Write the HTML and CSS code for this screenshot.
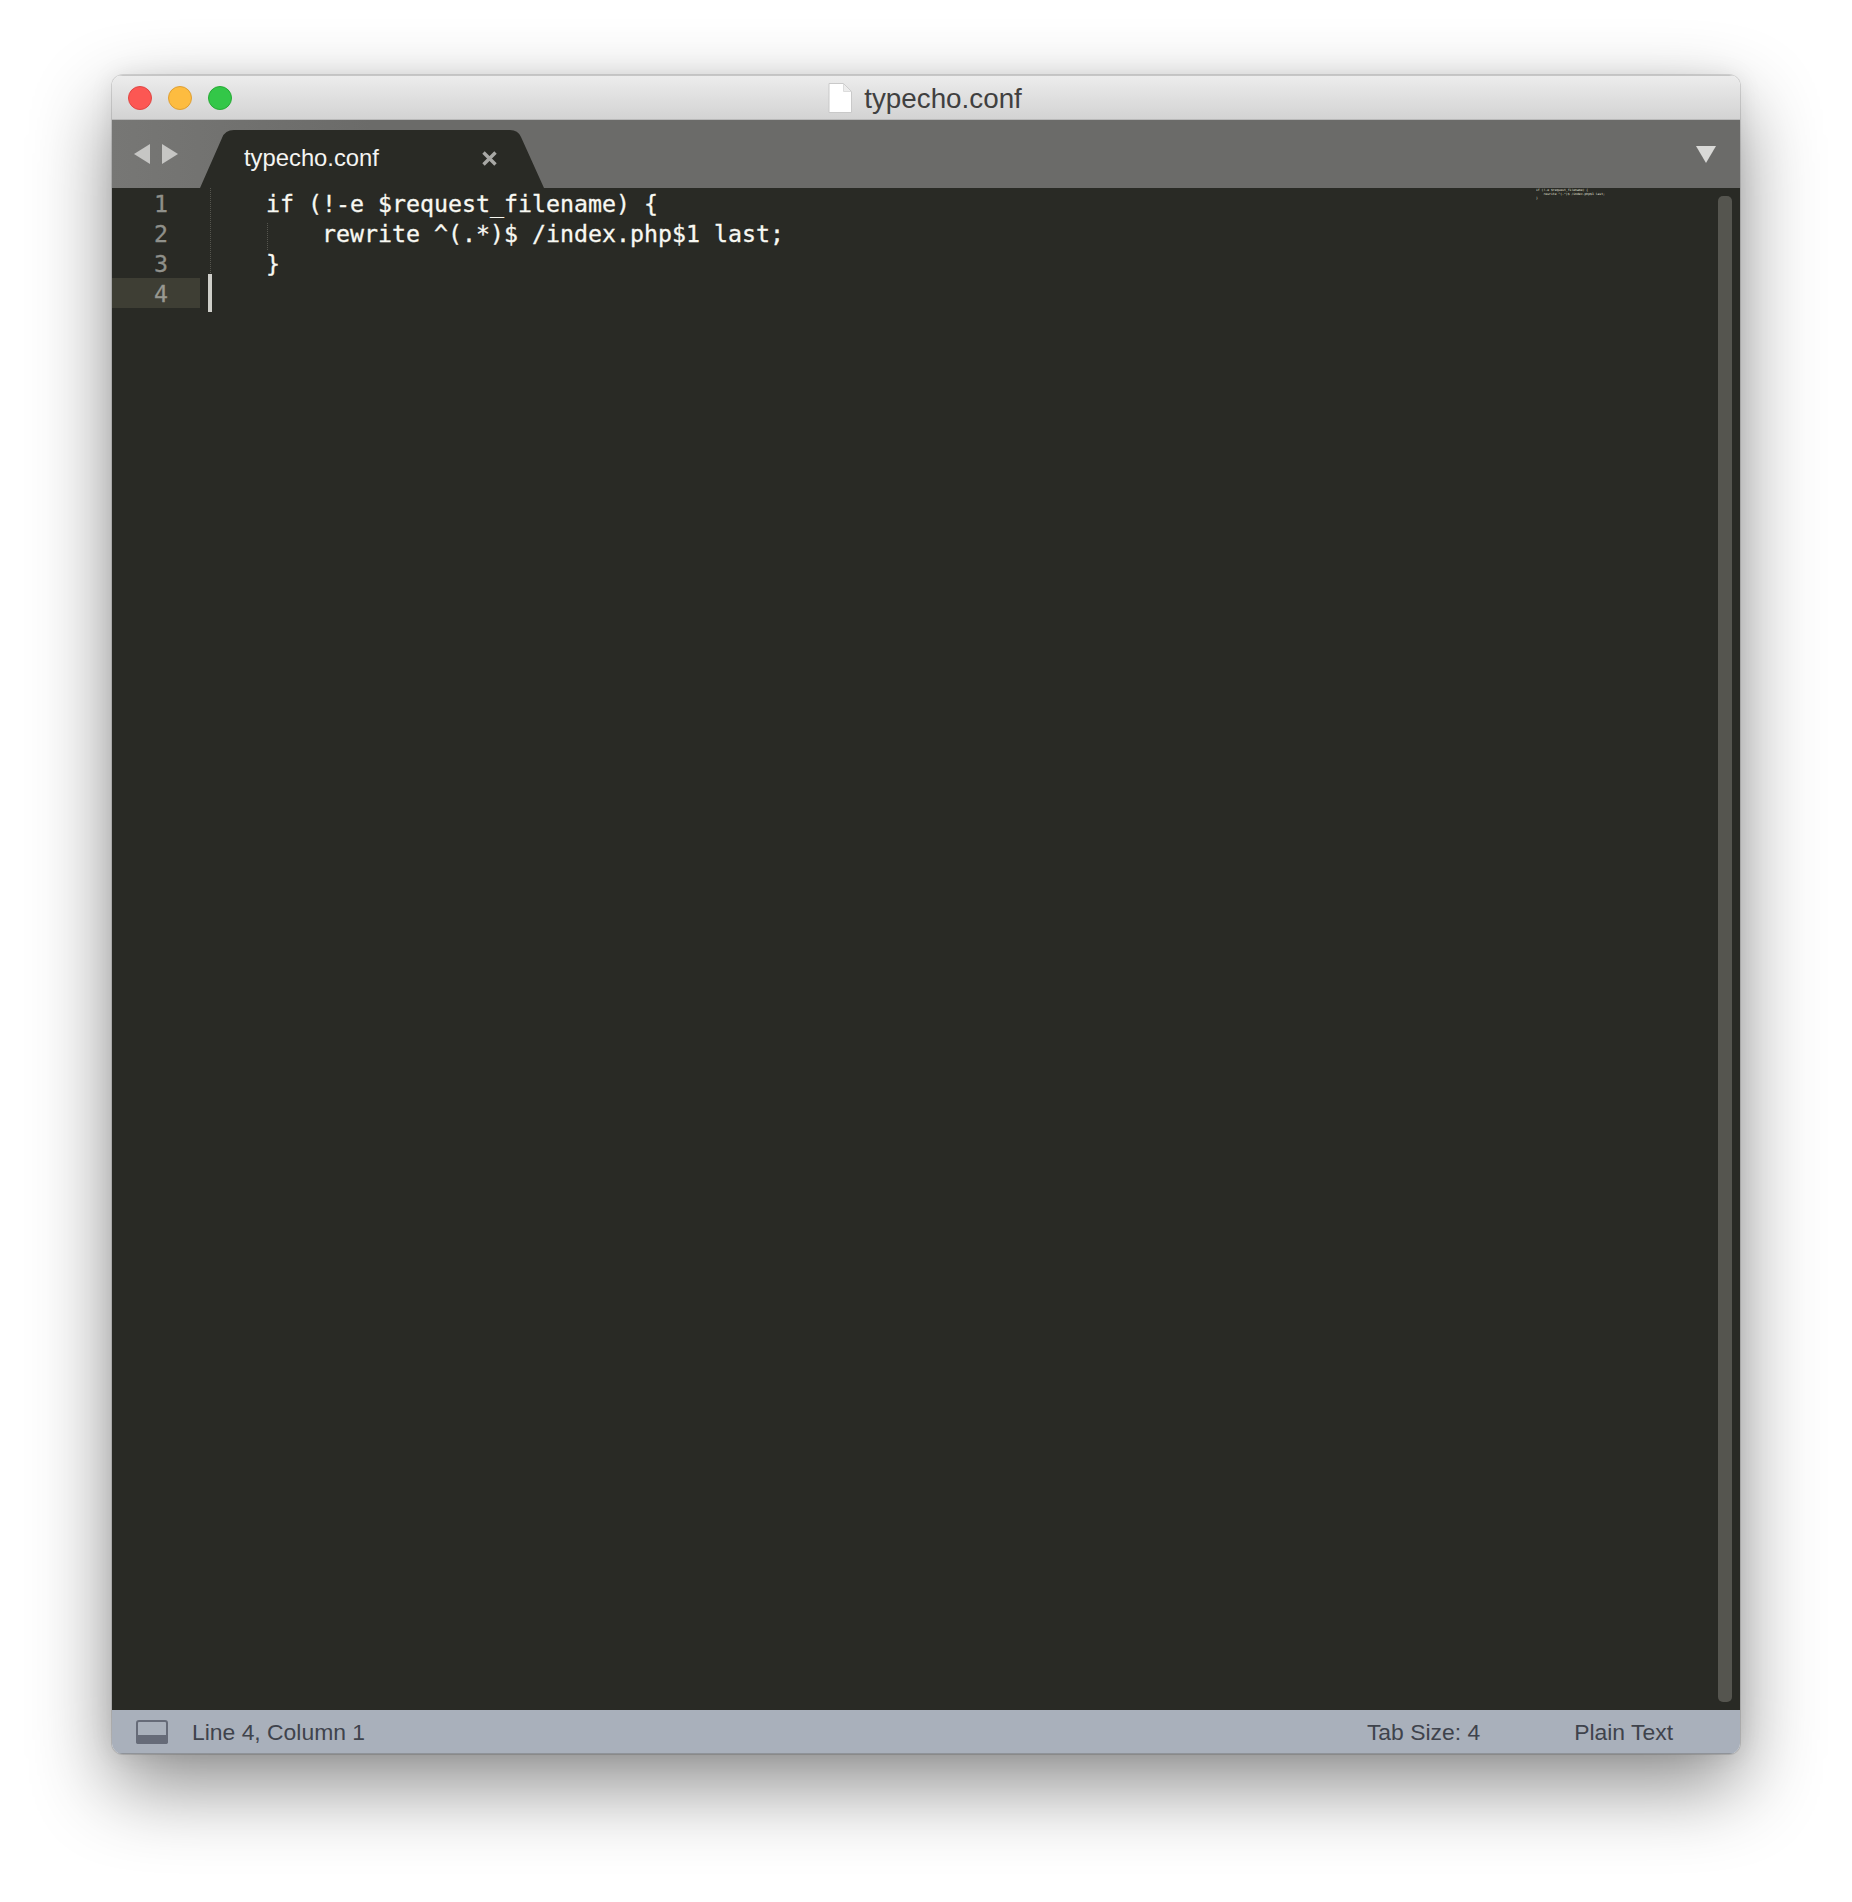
FILE: index.html
```html
<!DOCTYPE html>
<html lang="en">
<head>
<meta charset="utf-8">
<title>typecho.conf</title>
<link rel="stylesheet" href="styles.css">
</head>
<body>
<main class="window">
  <header class="titlebar">
    <div class="lights">
      <span class="light light-red"></span>
      <span class="light light-yellow"></span>
      <span class="light light-green"></span>
    </div>
    <div class="title">
      <svg class="doc-icon" width="24" height="30" viewBox="0 0 24 30"><path d="M1 .5H15.500L23.500 8.500V29.500H1Z" fill="#fff" stroke="#c9c9c9"/><path d="M15.500 1V8.500H23" fill="#ececec" stroke="#dcdcdc"/></svg>
      <span class="title-text">typecho.conf</span>
    </div>
  </header>
  <nav class="tabbar">
    <div class="nav-arrows">
      <svg width="16" height="20" viewBox="0 0 16 20"><path d="M16 0V20L0 10Z" fill="#c6c6c4"/></svg>
      <svg width="16" height="20" viewBox="0 0 16 20"><path d="M0 0V20L16 10Z" fill="#c6c6c4"/></svg>
    </div>
    <div class="tab">
      <svg class="tab-shape" width="344" height="58" viewBox="0 0 344 58"><path d="M0 58L22 8Q25 0 34 0H310Q318 0 321 7L344 58Z" fill="#292a25"/></svg>
      <span class="tab-label">typecho.conf</span>
      <svg class="tab-close" width="15" height="15" viewBox="0 0 15 15"><path d="M1.500 1.500L13.500 13.500M13.500 1.500L1.500 13.500" stroke="#a8a8a5" stroke-width="3.400"/></svg>
    </div>
    <svg class="tab-menu" width="20" height="17" viewBox="0 0 20 17"><path d="M0 0H20L10 17Z" fill="#d9d9d7"/></svg>
  </nav>
  <section class="editor">
    <div class="gutter">
      <div class="line-no">1</div>
      <div class="line-no">2</div>
      <div class="line-no">3</div>
      <div class="line-no line-no-active">4</div>
    </div>
    <div class="code">
      <span class="guide guide-outer"></span>
      <span class="guide guide-inner"></span>
      <span class="caret"></span>
      <div class="code-line">    if (!-e $request_filename) {</div>
      <div class="code-line">        rewrite ^(.*)$ /index.php$1 last;</div>
      <div class="code-line">    }</div>
      <div class="code-line"> </div>
    </div>
    <div class="minimap" aria-hidden="true">
      <div class="minimap-line">if (!-e $request_filename) {</div>
      <div class="minimap-line">    rewrite ^(.*)$ /index.php$1 last;</div>
      <div class="minimap-line">}</div>
    </div>
    <div class="scrollbar"><div class="scroll-thumb"></div></div>
  </section>
  <footer class="statusbar">
    <svg class="panel-icon" width="32" height="24" viewBox="0 0 32 24"><rect x="1" y="1" width="30" height="22" rx="2" fill="none" stroke="#666b78" stroke-width="2"/><path d="M0 15H32V22A2 2 0 0 1 30 24H2A2 2 0 0 1 0 22Z" fill="#666b78"/></svg>
    <span class="status-text status-pos">Line 4, Column 1</span>
    <span class="status-text status-tab">Tab Size: 4</span>
    <span class="status-text status-syntax">Plain Text</span>
  </footer>
</main>
</body>
</html>
```
FILE: styles.css
```css
* { box-sizing: border-box; }
html, body { margin: 0; height: 100%; background: #fff; }
body { padding: 75px 112px 148px; overflow: hidden; font-family: "Liberation Sans", Arial, sans-serif; }

.window {
  display: flex;
  flex-direction: column;
  height: 1679px;
  border-radius: 11px;
  overflow: hidden;
  box-shadow: 0 0 0 1px rgba(0, 0, 0, .12), 0 32px 80px 0 rgba(0, 0, 0, .45), 0 0 24px rgba(0, 0, 0, .08);
}

.titlebar {
  flex: 0 0 45px;
  display: grid;
  grid-template-columns: 1fr auto 1fr;
  align-items: center;
  background: linear-gradient(#ececec, #d3d3d3);
  border-top: 1px solid #c6c6c6;
  border-bottom: 1px solid #b9b9b9;
}
.lights { display: flex; gap: 16px; padding-left: 16px; }
.light { width: 24px; height: 24px; border-radius: 50%; border: 1px solid; }
.light-red { background: #fc5753; border-color: #df4744; }
.light-yellow { background: #fdbc40; border-color: #de9f34; }
.light-green { background: #33c748; border-color: #27aa35; }
.title { display: flex; align-items: center; gap: 12px; padding-right: 2px; }
.doc-icon { display: block; }
.title-text { font-size: 27.800px; line-height: 34px; color: #404040; padding-top: 3px; }

.tabbar {
  flex: 0 0 68px;
  display: flex;
  align-items: flex-end;
  position: relative;
  background: linear-gradient(90deg, #777775, #6b6b69 260px);
}
.nav-arrows {
  display: flex;
  gap: 12px;
  align-self: flex-start;
  margin: 24px 0 0 22px;
  width: 66px;
}
.nav-arrows svg { display: block; flex: none; }
.tab {
  position: relative;
  width: 344px;
  height: 58px;
  display: flex;
  align-items: center;
  padding: 0 47px 2px 44px;
  justify-content: space-between;
}
.tab-shape { position: absolute; left: 0; top: 0; }
.tab-label { position: relative; font-size: 23.800px; color: #f4f4f2; }
.tab-close { position: relative; }
.tab-menu { position: absolute; right: 24px; top: 26px; }

.editor { flex: 1; display: flex; min-height: 0; background: #292a25; }
.gutter { flex: 0 0 88px; }
.line-no {
  height: 30px;
  padding-right: 32px;
  text-align: right;
  font: 23.250px/32px "DejaVu Sans Mono", monospace;
  color: #8f908a;
  -webkit-text-stroke: .3px #8f908a;
}
.line-no-active { background: #3e3e34; color: #9a9a92; }
.code { flex: 1; position: relative; padding-left: 10px; }
.code-line {
  height: 30px;
  white-space: pre;
  font: 23.250px/32px "DejaVu Sans Mono", monospace;
  color: #f8f8f2;
  -webkit-text-stroke: .3px #f8f8f2;
}
.guide {
  position: absolute;
  width: 1px;
  background: repeating-linear-gradient(#55554e 0 1px, transparent 1px 2px);
}
.guide-outer { left: 10px; top: 0; height: 86px; }
.guide-inner { left: 67px; top: 35px; height: 27px; }
.caret { position: absolute; left: 8px; top: 86px; width: 4px; height: 38px; background: #cfcfca; }
.minimap {
  flex: 0 0 182px;
  margin-left: 2px;
  font-family: "DejaVu Sans Mono", monospace;
  font-size: 3.100px;
  color: #e4e4df;
}
.minimap-line { height: 4px; line-height: 4px; white-space: pre; overflow: hidden; }
.scrollbar { flex: 0 0 20px; padding: 8px 6px 8px 0; margin-right: 2px; }
.scroll-thumb { height: 100%; border-radius: 5px; background: #55554f; }

.statusbar {
  flex: 0 0 44px;
  display: flex;
  align-items: center;
  background: #a9b0bb;
  border-bottom: 1px solid #8f9399;
  padding: 0 0 0 24px;
}
.panel-icon { display: block; }
.status-text { font-size: 22.900px; color: #3f434c; padding-top: 1px; }
.status-pos { margin-left: 24px; }
.status-tab { margin-left: auto; }
.status-syntax { margin-left: 94px; margin-right: 67px; }
```
